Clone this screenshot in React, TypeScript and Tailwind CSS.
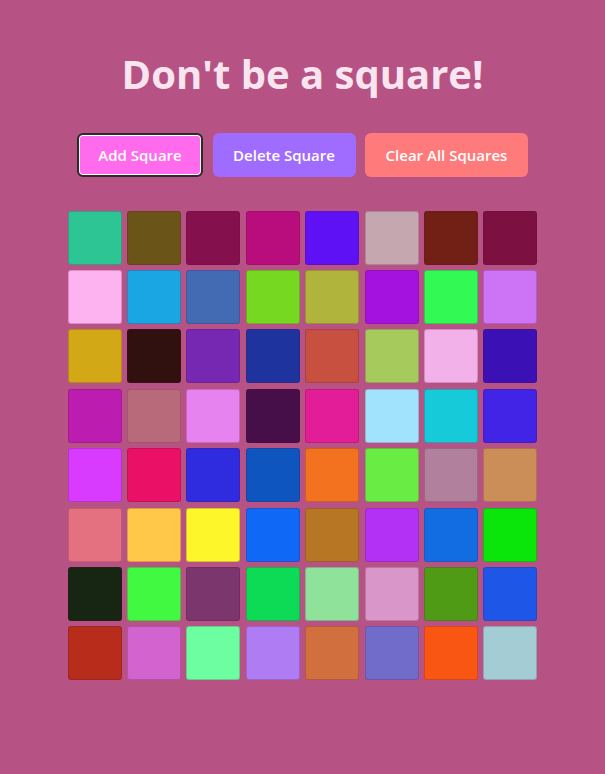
import React from "react";

const colors: string[] = [
  "#2EC595", "#6A5417", "#84114D", "#B90D7D", "#5F11F5", "#C5A8AF", "#721F15", "#7B1041",
  "#FEB3F1", "#1AA6E2", "#436BB3", "#76D821", "#B1B43C", "#A412E0", "#32F954", "#CC74F5",
  "#D3A816", "#311110", "#7728B3", "#1E339E", "#C85040", "#A6CB5C", "#F2B1E9", "#3B10B5",
  "#BD1CB0", "#B96A7A", "#E683EE", "#460F4A", "#E31C97", "#A1E3FD", "#16CAD9", "#4124E6",
  "#D83BFD", "#EA1066", "#2F2CE0", "#0E55C0", "#F2721F", "#69EC43", "#B1809C", "#CC8E59",
  "#E3717F", "#FFC849", "#FCF62B", "#0F69F6", "#B77624", "#B231F4", "#116DE1", "#0AE50A",
  "#162613", "#42F942", "#7B366E", "#0DDB56", "#8EE29A", "#D897C8", "#509B15", "#1E56E8",
  "#B72C1A", "#D263CF", "#6DFEA1", "#B07CF3", "#D26F3F", "#716CC9", "#F95614", "#A3CCD4",
];

export default function App() {
  return (
    <div
      className="min-h-screen w-full bg-[#B65384] flex flex-col items-center pt-[50px]"
      style={{ fontFamily: '"Open Sans", "Noto Sans", sans-serif' }}
    >
      <h1 className="text-[40px] leading-[48px] font-bold text-[#F8E5EF]">
        Don't be a square!
      </h1>
      <div className="mt-[35px] flex gap-[9.5px]">
        <button className="w-[126px] h-[44px] rounded-[6px] bg-[#FF6BEC] text-white text-[15px] font-semibold border-2 border-[#2b2b2b] shadow-[inset_0_0_0_1px_#ffffff]">
          Add Square
        </button>
        <button className="w-[143px] h-[44px] rounded-[6px] bg-[#A06CFF] text-white text-[15px] font-semibold">
          Delete Square
        </button>
        <button className="w-[163px] h-[44px] rounded-[6px] bg-[#FF7A7A] text-white text-[15px] font-semibold">
          Clear All Squares
        </button>
      </div>
      <div className="mt-[31px] w-[475px] grid grid-cols-8">
        {colors.map((c, i) => (
          <div key={i} className="p-[2.7px]">
            <div
              className="aspect-square w-full rounded-[3px] border border-[rgba(90,10,60,0.22)]"
              style={{ backgroundColor: c }}
            />
          </div>
        ))}
      </div>
    </div>
  );
}
